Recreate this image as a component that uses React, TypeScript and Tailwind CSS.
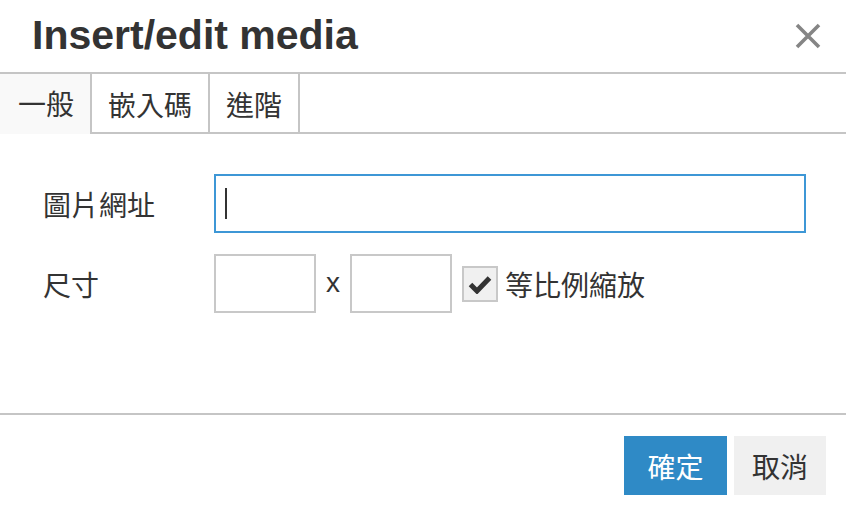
const cjk = "font-['Noto_Sans_CJK_TC','Noto_Sans_CJK_SC',sans-serif]";

function CloseIcon() {
  return (
    <svg width="26" height="26" viewBox="0 0 26 26" fill="none">
      <path d="M2 2L24 24M24 2L2 24" stroke="#858585" strokeWidth="3.6" />
    </svg>
  );
}

function Check() {
  return (
    <svg width="24" height="20" viewBox="0 0 24 20" fill="none">
      <path d="M2.5 10.5L9 17L21.5 4" stroke="#333" strokeWidth="5" strokeLinejoin="miter" />
    </svg>
  );
}

export default function App() {
  const tabs = ["嵌入碼", "進階"];
  return (
    <div className={`w-[846px] bg-white text-[#333] ${cjk}`}>
      <div className="flex h-[74px] items-center justify-between border-b-2 border-[#c5c5c5] pl-[32px] pr-[25px]">
        <h1 className="pb-[1px] font-['Liberation_Sans',Arial,sans-serif] text-[41px] font-bold leading-none text-[#333]">
          Insert/edit media
        </h1>
        <CloseIcon />
      </div>

      <div className="flex h-[60px] text-[28px] leading-none">
        <div className="flex w-[92px] items-center justify-center border-r-2 border-[#c5c5c5] bg-[#f9f9f9] pb-[2px] pl-[2px]">
          一般
        </div>
        {tabs.map((t) => (
          <div
            key={t}
            className="flex items-center border-r-2 border-b-2 border-[#c5c5c5] px-[16px] pt-[1px]"
          >
            {t}
          </div>
        ))}
        <div className="flex-1 border-b-2 border-[#c5c5c5]" />
      </div>

      <div className="flex h-[279px] flex-col gap-[21px] pt-[40px] text-[28px] leading-none">
        <div className="flex h-[59px] items-center">
          <span className="w-[214px] shrink-0 pl-[43px]">圖片網址</span>
          <div className="flex h-[59px] w-[592px] items-center border-2 border-[#3d97d6] pl-[9px]">
            <div className="h-[31px] w-[2px] bg-[#333]" />
          </div>
        </div>
        <div className="flex h-[59px] items-center">
          <span className="w-[214px] shrink-0 pl-[43px]">尺寸</span>
          <div className="h-[59px] w-[102px] border-2 border-[#c8c8c8]" />
          <span className="w-[34px] pb-[2px] text-center font-['Liberation_Sans',Arial,sans-serif]">x</span>
          <div className="h-[59px] w-[102px] border-2 border-[#c8c8c8]" />
          <div className="ml-[10px] flex h-[36px] w-[36px] items-center justify-center border-2 border-[#c8c8c8] bg-[#f0f0f0]">
            <Check />
          </div>
          <span className="ml-[7px]">等比例縮放</span>
        </div>
      </div>

      <div className="flex h-[104px] justify-end gap-[7px] border-t-2 border-[#c5c5c5] pr-[20px] pt-[21px]">
        <button className="h-[59px] w-[103px] bg-[#2f8ac6] text-[28px] leading-none text-white">
          確定
        </button>
        <button className="h-[59px] w-[92px] bg-[#f0f0f0] text-[28px] leading-none text-[#333]">
          取消
        </button>
      </div>
    </div>
  );
}
